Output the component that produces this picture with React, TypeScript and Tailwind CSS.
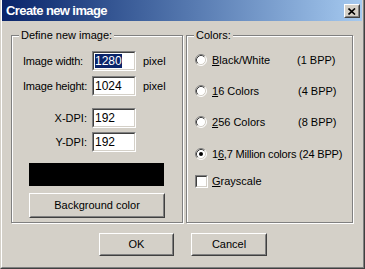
import React from 'react';

const font = { fontFamily: '"Liberation Sans", Arial, sans-serif' };

// classic sunken edit field
const Edit: React.FC<{ value: string; selected?: boolean }> = ({ value, selected }) => (
    <div className="w-[44px] h-[20px] border border-t-[#808080] border-l-[#808080] border-r-white border-b-white">
        <div className="h-full border border-t-[#404040] border-l-[#404040] border-r-[#d4d0c8] border-b-[#d4d0c8] bg-white flex items-center pl-[1px] text-[12px] leading-[14px]">
            {selected ? <span className="bg-[#0a246a] text-white">{value}</span> : <span>{value}</span>}
        </div>
    </div>
);

// classic raised push button
const Button: React.FC<{ label: string; className?: string }> = ({ label, className }) => (
    <div className={'border border-t-white border-l-white border-r-[#404040] border-b-[#404040] ' + (className ?? '')}>
        <div className="h-full border border-t-[#d4d0c8] border-l-[#d4d0c8] border-r-[#808080] border-b-[#808080] flex items-center justify-center text-[11px]">
            {label}
        </div>
    </div>
);

const Radio: React.FC<{ checked?: boolean }> = ({ checked }) => (
    <svg width="12" height="12" viewBox="0 0 12 12" className="shrink-0">
        <circle cx="6" cy="6" r="5" fill="white" />
        <path d="M2.11 9.89 A5.5 5.5 0 0 1 9.89 2.11" fill="none" stroke="#808080" />
        <path d="M9.89 2.11 A5.5 5.5 0 0 1 2.11 9.89" fill="none" stroke="#ffffff" />
        <path d="M2.82 9.18 A4.5 4.5 0 0 1 9.18 2.82" fill="none" stroke="#404040" />
        <path d="M9.18 2.82 A4.5 4.5 0 0 1 2.82 9.18" fill="none" stroke="#d4d0c8" />
        {checked && <circle cx="6" cy="6" r="2" fill="black" />}
    </svg>
);

const Group: React.FC<{ title: string; className?: string; children: React.ReactNode }> = ({ title, className, children }) => (
    <div className={'relative border border-[#808080] shadow-[inset_1px_1px_0_#fff,1px_1px_0_#fff] ' + (className ?? '')}>
        <span className="absolute left-[7px] -top-[8px] px-[2px] bg-[#d4d0c8] text-[11px] leading-[14px]">{title}</span>
        {children}
    </div>
);

const Row: React.FC<{
    label: string;
    value: string;
    unit?: string;
    selected?: boolean;
    right?: boolean;
    className?: string;
}> = ({ label, value, unit, selected, right, className }) => (
    <div className={'flex items-center h-[20px] ' + (className ?? '')}>
        <span
            className={
                'w-[75px] shrink-0 whitespace-nowrap text-[11px] ' + (right ? 'text-right' : 'pl-[11px] tracking-[-0.2px]')
            }
        >
            {label}
        </span>
        <div className="ml-[5px]">
            <Edit value={value} selected={selected} />
        </div>
        {unit && <span className="ml-[7px] text-[11px]">{unit}</span>}
    </div>
);

export default function App() {
    return (
        <div
            className="w-[365px] h-[269px] bg-[#d4d0c8] border-l border-l-[#d4d0c8] border-r border-b border-r-[#404040] border-b-[#404040] overflow-hidden text-black"
            style={font}
        >
            <div className="h-full border-l border-l-white border-r border-b border-r-[#808080] border-b-[#808080] flex flex-col">
                {/* title bar */}
                <div className="h-[21px] mr-[1px] shrink-0 flex items-start justify-between pl-[4px] pr-[2px] bg-gradient-to-r from-[#0a246a] to-[#a6caf0]">
                    <span className="text-white font-bold text-[13px] leading-[21px] tracking-[-0.6px]">Create new image</span>
                    <div className="mt-[4px] w-[16px] h-[14px] border border-t-white border-l-white border-r-[#404040] border-b-[#404040]">
                        <div className="h-full border border-t-[#d4d0c8] border-l-[#d4d0c8] border-r-[#808080] border-b-[#808080] flex items-center justify-center bg-[#d4d0c8]">
                            <svg width="8" height="7" viewBox="0 0 8 7">
                                <path d="M0.5 0.5 L7 6.5 M7 0.5 L0.5 6.5" stroke="black" strokeWidth="1.6" />
                            </svg>
                        </div>
                    </div>
                </div>

                {/* groups */}
                <div className="flex mt-[14px] pl-[9px]">
                    <Group title="Define new image:" className="w-[172px] h-[188px]">
                        <div className="pt-[15px]">
                            <Row label="Image width:" value="1280" unit="pixel" selected />
                            <Row label="Image height:" value="1024" unit="pixel" className="mt-[5px]" />
                            <Row label="X-DPI:" value="192" right className="mt-[12px]" />
                            <Row label="Y-DPI:" value="192" right className="mt-[4px]" />
                            <div className="ml-[17px] mt-[11px] w-[135px] h-[23px] bg-black" />
                            <Button label="Background color" className="ml-[17px] mt-[7px] w-[136px] h-[25px]" />
                        </div>
                    </Group>
                    <Group title="Colors:" className="ml-[3px] w-[167px] h-[188px]">
                        <div className="pt-[18px] pl-[8px] text-[11px]">
                            <div className="flex items-center h-[12px]">
                                <Radio />
                                <span className="ml-[5px] w-[85px]">
                                    <u>B</u>lack/White
                                </span>
                                <span>(1 BPP)</span>
                            </div>
                            <div className="flex items-center h-[12px] mt-[19px]">
                                <Radio />
                                <span className="ml-[5px] w-[86px]">
                                    <u>1</u>6 Colors
                                </span>
                                <span>(4 BPP)</span>
                            </div>
                            <div className="flex items-center h-[12px] mt-[19px]">
                                <Radio />
                                <span className="ml-[5px] w-[86px]">
                                    <u>2</u>56 Colors
                                </span>
                                <span>(8 BPP)</span>
                            </div>
                            <div className="flex items-center h-[12px] mt-[20px]">
                                <Radio checked />
                                <span className="ml-[5px] whitespace-nowrap tracking-[-0.2px]">
                                    1<u>6</u>,7 Million colors (24 BPP)
                                </span>
                            </div>
                            <div className="flex items-center h-[13px] mt-[15px]">
                                <div className="w-[13px] h-[13px] border border-t-[#808080] border-l-[#808080] border-r-white border-b-white">
                                    <div className="h-full border border-t-[#404040] border-l-[#404040] border-r-[#d4d0c8] border-b-[#d4d0c8] bg-white" />
                                </div>
                                <span className="ml-[4px]">
                                    <u>G</u>rayscale
                                </span>
                            </div>
                        </div>
                    </Group>
                </div>

                {/* buttons */}
                <div className="flex mt-[10px] pl-[97px]">
                    <Button label="OK" className="w-[75px] h-[23px]" />
                    <Button label="Cancel" className="ml-[17px] w-[76px] h-[23px]" />
                </div>
            </div>
        </div>
    );
}
